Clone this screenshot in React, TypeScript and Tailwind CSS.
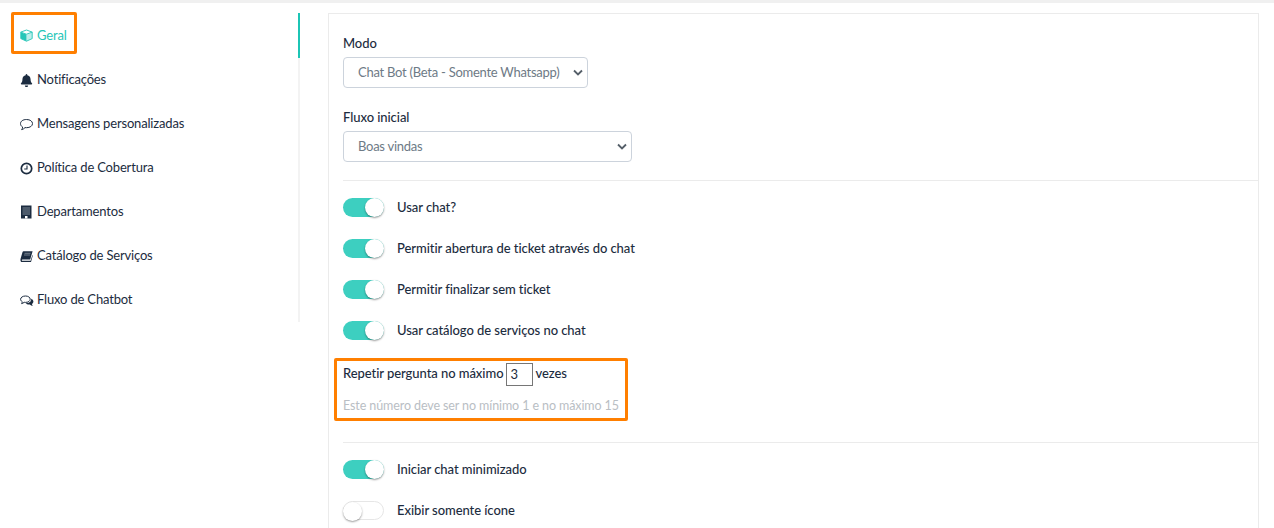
import { FaBell } from 'react-icons/fa'
import type { ReactNode } from 'react'

function CubeIcon() {
    return (
        <svg width="13" height="13" viewBox="0 0 13 13">
            <path d="M6.5 5.4 L12.2 3.3 L12.2 9.6 L6.5 12.2 Z" fill="currentColor" fillOpacity="0.3" />
            <path d="M0.8 3.3 L6.5 5.4 L6.5 12.2 L0.8 9.6 Z" fill="currentColor" />
            <path d="M6.5 1 L12.2 3.1 L12.2 9.6 L6.5 12.2 L0.8 9.6 L0.8 3.1 Z M0.8 3.1 L6.5 5.2 L12.2 3.1" fill="none" stroke="currentColor" strokeWidth="0.9" />
        </svg>
    )
}

function CommentIcon() {
    return (
        <svg width="13" height="13" viewBox="0 0 13 13">
            <path d="M6.5 1.5 C10 1.5 12.5 3.2 12.5 5.6 C12.5 8 10 9.7 6.5 9.7 L5 9.6 C4.2 10.6 3 11.3 1.6 11.6 C2.3 10.8 2.6 10 2.6 9 C1.2 8.2 0.5 7 0.5 5.6 C0.5 3.2 3 1.5 6.5 1.5 Z" fill="none" stroke="currentColor" strokeWidth="1" />
        </svg>
    )
}

function ClockIcon() {
    return (
        <svg width="13" height="13" viewBox="0 0 13 13">
            <circle cx="6.5" cy="6.5" r="5.2" fill="none" stroke="currentColor" strokeWidth="1.7" />
            <path d="M7 3.5 V7 H4.2" fill="none" stroke="currentColor" strokeWidth="1.1" />
        </svg>
    )
}

function BuildingIcon() {
    return (
        <svg width="13" height="14" viewBox="0 0 13 14">
            <rect x="1" y="0.5" width="10.5" height="13" fill="currentColor" />
            <path d="M2.5 3 H10 M2.5 5 H10 M2.5 7 H10 M2.5 9 H10" stroke="#8b95a1" strokeWidth="0.9" />
            <rect x="5" y="11" width="2.5" height="2.5" fill="#fff" />
        </svg>
    )
}

function BookIcon() {
    return (
        <svg width="13" height="13" viewBox="0 0 13 13">
            <path d="M3.6 1.2 H12.6 L10.2 9.4 H2.4 C1.7 9.4 1.6 10.8 2.4 10.8 H10.6 L12.4 5 L12.8 5.6 L11 12 H2 C0.6 12 0.2 10.4 0.6 8.8 L2.4 2.4 C2.6 1.7 3 1.2 3.6 1.2 Z" fill="currentColor" />
            <path d="M4.5 3.3 H10.5 M4 5 H10" stroke="#8b95a1" strokeWidth="0.8" />
        </svg>
    )
}

function CommentsIcon() {
    return (
        <svg width="14" height="13" viewBox="0 0 14 13">
            <path d="M5.5 2 C8.2 2 10.2 3.4 10.2 5.2 C10.2 7 8.2 8.4 5.5 8.4 L4.2 8.3 C3.4 9 2.5 9.4 1.6 9.6 C2 9 2.2 8.4 2.2 7.7 C1.2 7 0.6 6.2 0.6 5.2 C0.6 3.4 2.8 2 5.5 2 Z" fill="none" stroke="currentColor" strokeWidth="1" />
            <path d="M11.2 4.8 C12.6 5.4 13.4 6.4 13.4 7.6 C13.4 8.6 12.8 9.4 12 10 C12 10.8 12.3 11.4 12.8 12 C11.6 11.8 10.6 11.2 9.8 10.4 C8 10.6 6.4 10 5.6 9.2 C8.6 9.4 11.6 7.8 11.2 4.8 Z" fill="currentColor" />
        </svg>
    )
}

const NAV_ITEMS: { label: string; icon: ReactNode; active?: boolean }[] = [
    { label: 'Geral', icon: <CubeIcon />, active: true },
    { label: 'Notificações', icon: <FaBell className="h-[13px] w-[13px]" /> },
    { label: 'Mensagens personalizadas', icon: <CommentIcon /> },
    { label: 'Política de Cobertura', icon: <ClockIcon /> },
    { label: 'Departamentos', icon: <BuildingIcon /> },
    { label: 'Catálogo de Serviços', icon: <BookIcon /> },
    { label: 'Fluxo de Chatbot', icon: <CommentsIcon /> },
]

function Toggle({ label, on = true }: { label: string; on?: boolean }) {
    return (
        <div className="flex h-[21px] items-center">
            <span className={`relative h-[19px] w-[41px] rounded-full ${on ? 'bg-[#3dcfc0]' : 'border border-[#e6e6e6] bg-white'}`}>
                <span className={`absolute top-0 h-[19px] w-[19px] rounded-full bg-white shadow-[0_1px_2px_rgba(0,0,0,0.4)] ${on ? 'right-0' : '-left-px -top-px'}`} />
            </span>
            <span className="ml-[13px] text-[13px] font-medium tracking-[-0.06px] text-[#1c2c40]">{label}</span>
        </div>
    )
}

function SelectBox({ value, width }: { value: string; width: string }) {
    return (
        <div className={`mt-[5px] flex h-[31px] items-center justify-between rounded-[4px] border border-[#ccd3dc] bg-white pl-[14px] pr-[4px] text-[13px] tracking-[-0.26px] text-[#6e7a86] ${width}`}>
            <span className="whitespace-nowrap">{value}</span>
            <svg width="10" height="7" viewBox="0 0 10 7" className="shrink-0">
                <path d="M1 1.5 L5 5.5 L9 1.5" fill="none" stroke="#555f69" strokeWidth="1.8" />
            </svg>
        </div>
    )
}

export default function App() {
    return (
        <div className="relative h-[528px] w-[1274px] overflow-hidden bg-white font-['Lato',sans-serif] text-[13px] text-[#1c2c40]">
            <div className="h-[3px] bg-[#f0f0f0]" />

            <div className="flex items-start pt-[10px]">
                {/* Menu lateral */}
                <div className="w-[300px] border-r-2 border-[#f3f3f3]">
                    {NAV_ITEMS.map(({ label, icon, active }) => (
                        <div
                            key={label}
                            className={`-mr-[2px] flex h-[44px] items-center border-r-2 pl-5 tracking-[-0.17px] ${active ? 'h-[45px] border-[#1cc5b5] text-[#26c6b8]' : 'border-transparent'}`}
                        >
                            <span className="flex w-[17px] shrink-0 items-center">{icon}</span>
                            <span className="whitespace-nowrap">{label}</span>
                        </div>
                    ))}
                </div>

                {/* Formulaire */}
                <div className="ml-[28px] h-[600px] w-[931px] border border-[#ebebeb] pl-[14px] pt-[20px]">
                    <div className="font-medium leading-[18px] tracking-[-0.06px]">Modo</div>
                    <SelectBox value="Chat Bot (Beta - Somente Whatsapp)" width="w-[245px]" />

                    <div className="mt-[20px] font-medium leading-[18px] tracking-[-0.06px]">Fluxo inicial</div>
                    <SelectBox value="Boas vindas" width="w-[289px]" />

                    <div className="mt-[18px] border-t border-[#ebebeb]" />

                    <div className="mt-[16px] flex flex-col gap-[20px]">
                        <Toggle label="Usar chat?" />
                        <Toggle label="Permitir abertura de ticket através do chat" />
                        <Toggle label="Permitir finalizar sem ticket" />
                        <Toggle label="Usar catálogo de serviços no chat" />
                    </div>

                    <div className="mt-[22px] flex h-[23px] items-center font-medium tracking-[-0.06px]">
                        <span className="whitespace-nowrap pb-[2px]">Repetir pergunta no máximo</span>
                        <span className="ml-[3px] mr-[2px] flex h-[23px] w-[27px] items-center border border-[#767676] pl-[3px] font-normal">3</span>
                        <span className="pb-[2px]">vezes</span>
                    </div>
                    <div className="mt-[11px] text-[12.5px] leading-[18px] tracking-[-0.1px] text-[#b9bec4]">Este número deve ser no mínimo 1 e no máximo 15</div>

                    <div className="mt-[27px] border-t border-[#ebebeb]" />

                    <div className="mt-[16px] flex flex-col gap-[20px]">
                        <Toggle label="Iniciar chat minimizado" />
                        <Toggle label="Exibir somente ícone" on={false} />
                    </div>
                </div>
            </div>

            {/* Destaques */}
            <div className="absolute left-[11px] top-[12px] h-[42px] w-[66px] rounded-[2px] border-[3px] border-[#ff7f00]" />
            <div className="absolute left-[334px] top-[358px] h-[63px] w-[294px] rounded-[2px] border-[3px] border-[#ff7f00]" />
        </div>
    )
}
